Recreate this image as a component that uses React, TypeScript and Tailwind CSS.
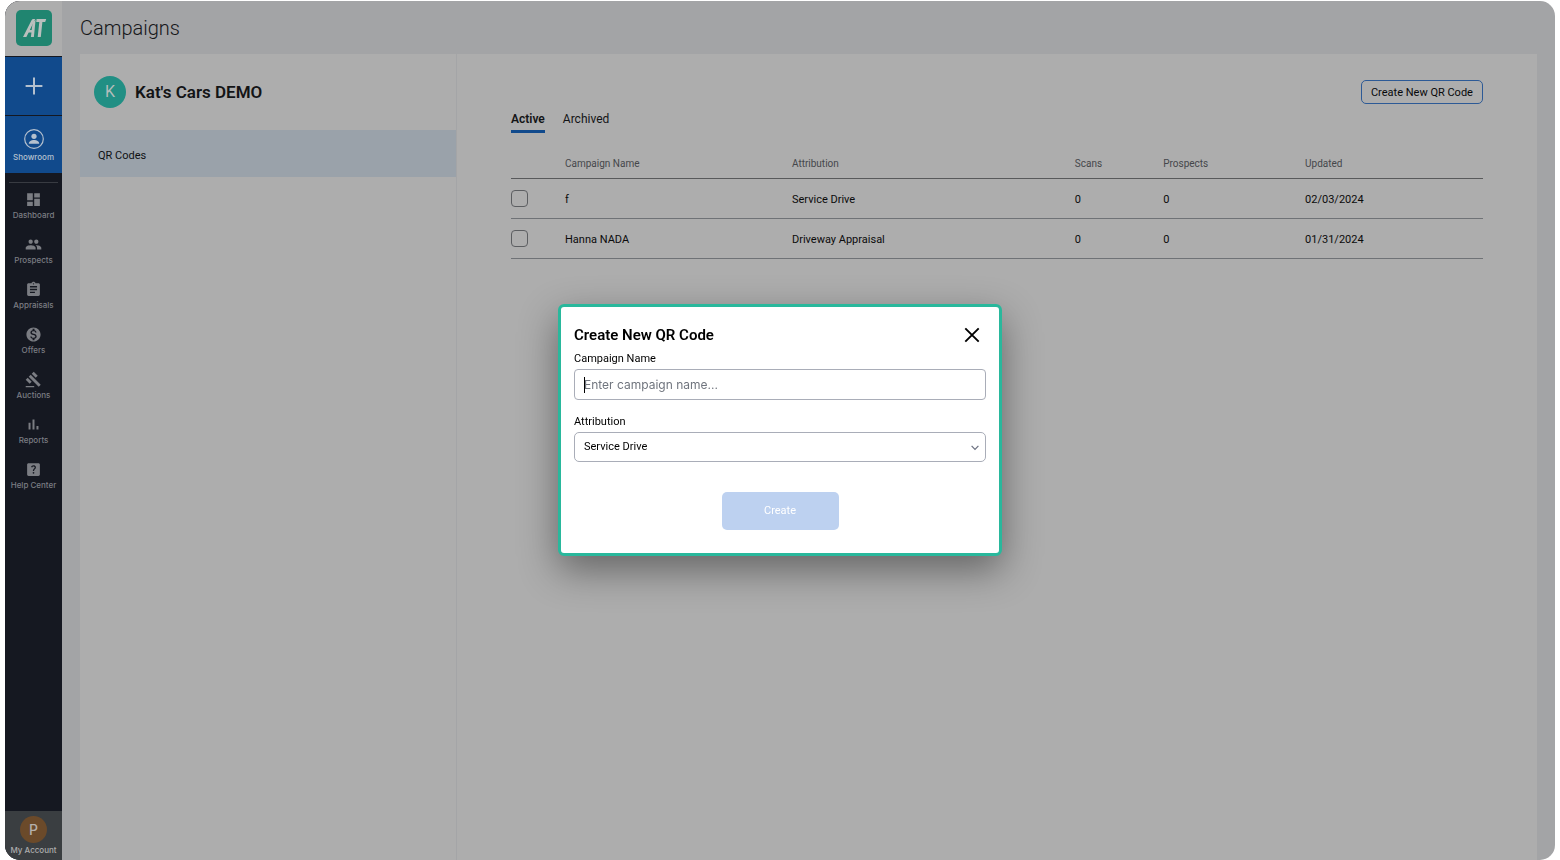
import type { ReactNode } from 'react';
import {
  MdAssignment,
  MdDashboard,
  MdGavel,
  MdHelpCenter,
  MdMonetizationOn,
  MdPeople,
} from 'react-icons/md';

function ReportsIcon({ className }: { className?: string }) {
  return (
    <svg viewBox="0 0 24 24" className={className} fill="currentColor" aria-hidden="true">
      <path d="M5 9.5h2.8V19H5zM10.6 5h2.8v14h-2.8zM16.2 14H19v5h-2.8z" />
    </svg>
  );
}

const navItems = [
  { label: 'Dashboard', Icon: MdDashboard },
  { label: 'Prospects', Icon: MdPeople },
  { label: 'Appraisals', Icon: MdAssignment },
  { label: 'Offers', Icon: MdMonetizationOn },
  { label: 'Auctions', Icon: MdGavel },
  { label: 'Reports', Icon: ReportsIcon },
  { label: 'Help Center', Icon: MdHelpCenter },
];

const campaigns = [
  { name: 'f', attribution: 'Service Drive', scans: 0, prospects: 0, updated: '02/03/2024' },
  { name: 'Hanna NADA', attribution: 'Driveway Appraisal', scans: 0, prospects: 0, updated: '01/31/2024' },
];

function Logo() {
  return (
    <svg viewBox="0 0 36 36" className="size-9" aria-hidden="true">
      <rect width="36" height="36" rx="5" fill="#208570" />
      <g fill="#b9bfbd">
        <path d="M7 27 L15.4 10.4 Q16.1 9 17.6 9 H19.2 L10.4 27z" />
        <path d="M16.6 12.6 L19.6 9.6 L17.9 27 H14.9z" />
        <path d="M11.6 20 H17 V22.6 H10.4z" />
        <path d="M20.6 9 H30.2 L29.2 12 H26.4 L24.8 27 H21.7 L23.3 12 H20.2z" />
      </g>
    </svg>
  );
}

function ShowroomIcon() {
  return (
    <svg viewBox="0 0 20 20" className="size-5" aria-hidden="true">
      <circle cx="10" cy="10" r="9.3" fill="none" stroke="#b4c0ce" strokeWidth="1.2" />
      <circle cx="10" cy="7.3" r="2.6" fill="#b4c0ce" />
      <path d="M4.8 14.7c0-2.4 2.6-3.7 5.2-3.7s5.2 1.3 5.2 3.7z" fill="#b4c0ce" />
    </svg>
  );
}

function Sidebar() {
  return (
    <nav className="flex w-[57px] shrink-0 flex-col bg-[#151821] font-['Inter','Liberation_Sans',sans-serif] text-[8px] leading-3 font-medium">
      <a href="#home" aria-label="Home" className="flex h-[55px] items-center justify-center bg-[#adadad] pb-0.5">
        <Logo />
      </a>
      <button
        type="button"
        aria-label="Add"
        className="mt-px flex h-[58px] items-center justify-center bg-[#114a8c]"
      >
        <svg viewBox="0 0 18 18" className="size-[18px]" aria-hidden="true">
          <path d="M9 0.6v16.8M0.6 9h16.8" stroke="#b4c0ce" strokeWidth="2" fill="none" />
        </svg>
      </button>
      <a
        href="#showroom"
        className="mt-px flex h-[57px] flex-col items-center justify-center gap-0.5 bg-[#114a8c] pt-0.5 text-[#b4c0ce]"
      >
        <ShowroomIcon />
        Showroom
      </a>
      <hr className="mx-1 mt-[9px] border-[#383b42]" />
      <ul className="mt-2 flex flex-col">
        {navItems.map(({ label, Icon }) => (
          <li key={label}>
            <a
              href={'#' + label.toLowerCase().replace(' ', '-')}
              className="flex h-[45px] flex-col items-center gap-px whitespace-nowrap text-[#7b7d83]"
            >
              <Icon className="size-[17px]" />
              {label}
            </a>
          </li>
        ))}
      </ul>
      <a
        href="#account"
        className="mt-auto flex h-[49px] flex-col items-center gap-px bg-[#3a3e41] pt-[5px] whitespace-nowrap text-[#adadad]"
      >
        <span className="flex size-[27px] items-center justify-center rounded-full bg-[#6b4a2a] text-sm font-medium text-[#b5b0ab]">
          P
        </span>
        My Account
      </a>
    </nav>
  );
}

function HeaderCell({ children, className }: { children: ReactNode; className: string }) {
  return (
    <th scope="col" className={'pt-0.5 text-left text-[10px] font-normal text-[#45474b] ' + className}>
      {children}
    </th>
  );
}

function CampaignTable() {
  return (
    <table className="mt-[14px] w-full table-fixed border-collapse text-[11px] text-[#0b0b0b]">
      <thead>
        <tr className="h-[31px] border-b border-[#58595b]">
          <td className="w-[54px]" />
          <HeaderCell className="w-[23.35%]">Campaign Name</HeaderCell>
          <HeaderCell className="w-[29.1%]">Attribution</HeaderCell>
          <HeaderCell className="w-[9.1%]">Scans</HeaderCell>
          <HeaderCell className="w-[14.6%]">Prospects</HeaderCell>
          <HeaderCell className="">Updated</HeaderCell>
        </tr>
      </thead>
      <tbody>
        {campaigns.map((c) => (
          <tr key={c.name} className="h-10 border-b border-[#6f7276]">
            <td>
              <input
                type="checkbox"
                aria-label={'Select ' + c.name}
                className="block size-[17px] appearance-none rounded-[4px] border border-[#5c5e61]"
              />
            </td>
            <td className="pt-1">{c.name}</td>
            <td className="pt-1">{c.attribution}</td>
            <td className="pt-1">{c.scans}</td>
            <td className="pt-1">{c.prospects}</td>
            <td className="pt-1">{c.updated}</td>
          </tr>
        ))}
      </tbody>
    </table>
  );
}

function CreateDialog() {
  return (
    <div className="fixed inset-0 flex items-center justify-center">
      <form
        role="dialog"
        aria-modal="true"
        aria-labelledby="dialog-title"
        className="flex w-[444px] flex-col rounded-md border-3 border-[#29b89c] bg-white px-[13px] pt-[18px] pb-[23px] text-[11px] leading-4 text-black shadow-[0_14px_38px_rgba(0,0,0,0.42)]"
      >
        <div className="flex items-center justify-between pr-[6px]">
          <h2 id="dialog-title" className="text-[15px] leading-5 font-semibold">
            Create New QR Code
          </h2>
          <button type="button" aria-label="Close">
            <svg viewBox="0 0 16 16" className="size-4" aria-hidden="true">
              <path d="M1.3 1.3l13.4 13.4M14.7 1.3L1.3 14.7" stroke="#000" strokeWidth="1.9" fill="none" />
            </svg>
          </button>
        </div>
        <label htmlFor="campaign-name" className="mt-[6px]">
          Campaign Name
        </label>
        <div className="relative mt-[2px]">
          <input
            id="campaign-name"
            type="text"
            placeholder="Enter campaign name..."
            className="block h-[31px] w-full rounded-[4px] border border-[#a9adb8] px-[9px] font-['Inter','Liberation_Sans',sans-serif] text-[12px] outline-none placeholder:text-[#70757e]"
          />
          <span className="absolute top-2 left-[10px] h-4 w-px bg-black" />
        </div>
        <label htmlFor="attribution" className="mt-[14px]">
          Attribution
        </label>
        <div className="relative mt-[2px]">
          <select
            id="attribution"
            className="block h-[30px] w-full appearance-none rounded-[5px] border border-[#a9adb8] bg-white px-[9px] text-[11px]"
          >
            <option>Service Drive</option>
          </select>
          <svg
            viewBox="0 0 8 6"
            className="pointer-events-none absolute top-[13px] right-[7px] h-[6px] w-2"
            aria-hidden="true"
          >
            <path d="M0.6 0.8L4 4.4l3.4-3.6" stroke="#6b7080" strokeWidth="1.2" fill="none" />
          </svg>
        </div>
        <button
          type="submit"
          disabled
          className="mt-[30px] h-[38px] w-[117px] self-center rounded-[5px] bg-[#bdd1f0] text-[11px] text-white"
        >
          Create
        </button>
      </form>
    </div>
  );
}

export default function App() {
  return (
    <div className="flex min-h-screen flex-col bg-white px-[5px] pt-px font-['Roboto','Liberation_Sans',sans-serif]">
      <div className="flex grow overflow-hidden rounded-[15px] bg-[#a3a4a6]">
        <Sidebar />
        <div className="flex min-w-0 grow flex-col px-[18px]">
          <header className="flex h-[53px] items-center">
            <h1 className="text-[20px] leading-6 font-light text-[#16171a]">Campaigns</h1>
          </header>
          <div className="flex grow bg-[#adadad]">
            <aside className="w-[377px] shrink-0 border-r border-[#a4a5a7]">
              <div className="flex h-[76px] items-center gap-[9px] pl-[14px]">
                <span className="flex size-8 items-center justify-center rounded-full bg-[#218f84] text-base text-[#b3bdbb]">
                  K
                </span>
                <h2 className="pt-0.5 text-[17px] font-semibold text-[#131416]">Kat's Cars DEMO</h2>
              </div>
              <a
                href="#qr-codes"
                className="flex h-[47px] items-center bg-[#9aa2aa] pt-[5px] pl-[18px] text-[11px] text-[#0f1113]"
              >
                QR Codes
              </a>
            </aside>
            <main className="min-w-0 grow px-[54px] pt-[26px]">
              <div className="flex justify-end">
                <button
                  type="button"
                  className="h-6 rounded-[5px] border border-[#2d5a96] px-[9px] pt-0.5 text-[11px] text-[#08090b]"
                >
                  Create New QR Code
                </button>
              </div>
              <div role="tablist" className="mt-[7px] flex gap-[18px] text-[12px] leading-4 text-[#131416]">
                <button
                  type="button"
                  role="tab"
                  aria-selected="true"
                  className="border-b-3 border-[#114a8c] pb-[3px] font-semibold"
                >
                  Active
                </button>
                <button type="button" role="tab" aria-selected="false" className="pb-[6px]">
                  Archived
                </button>
              </div>
              <CampaignTable />
            </main>
          </div>
        </div>
      </div>
      <CreateDialog />
    </div>
  );
}
